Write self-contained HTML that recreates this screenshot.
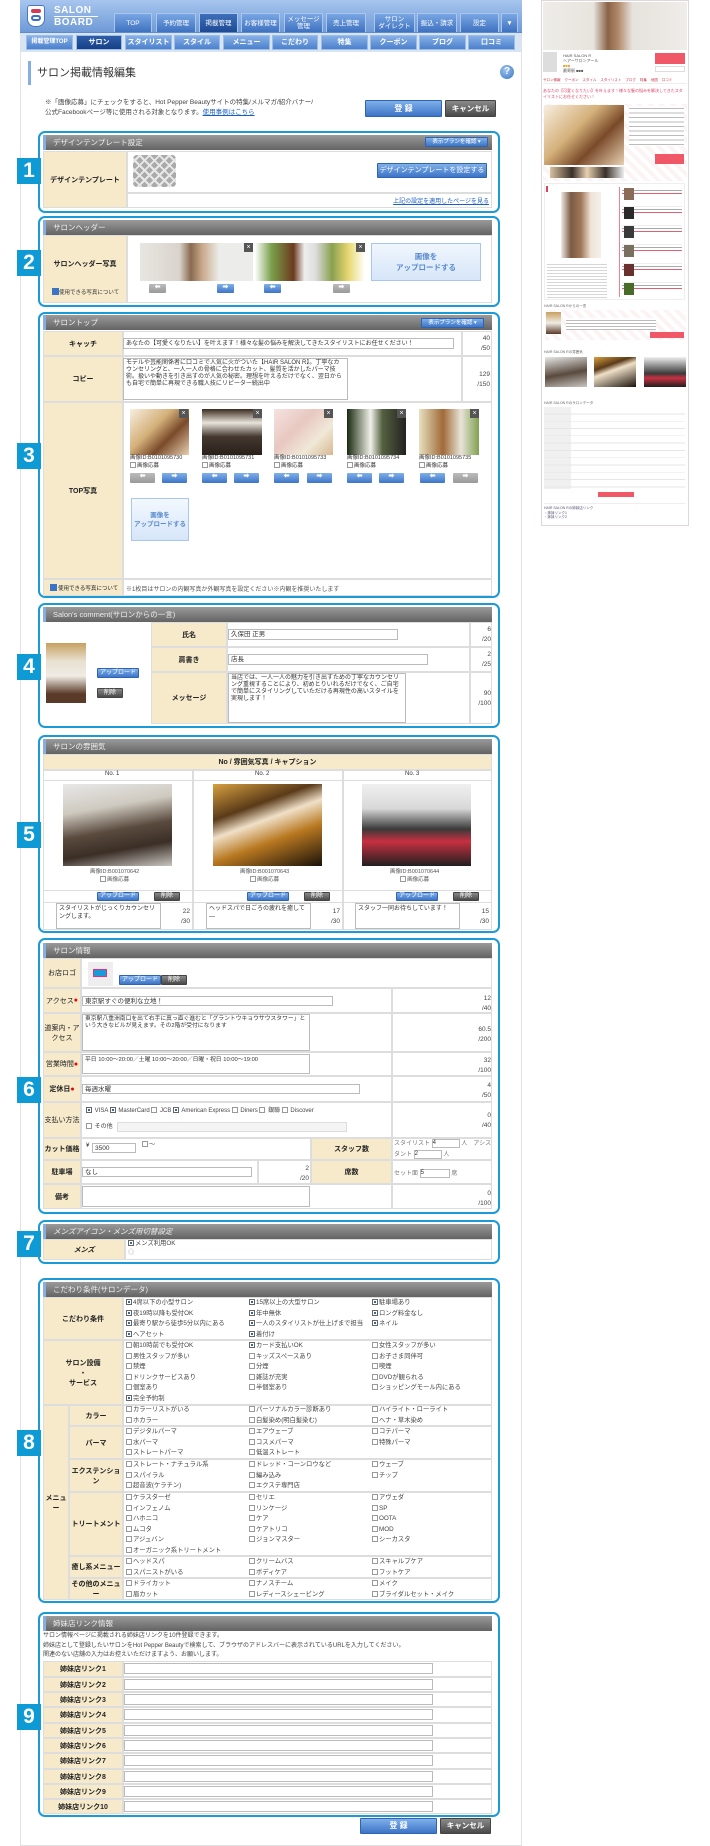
<!DOCTYPE html>
<html><head><meta charset="utf-8">
<style>
*{margin:0;padding:0;box-sizing:border-box}
body{width:710px;height:1846px;background:#fff;position:relative;overflow:hidden;font-family:"Liberation Sans","Noto Sans CJK JP",sans-serif;color:#333;font-size:7px}
.a{position:absolute}
.box{position:absolute;left:38px;width:462px;border:2px solid #1a9ad6;border-radius:7px;background:#fff}
.hd{position:absolute;left:43px;width:449px;height:15px;background:linear-gradient(#9a9a9a,#636363);color:#eee;font-size:7.5px;line-height:15px;padding-left:7px;border-left:3px solid #86aee3}
.bd{position:absolute;left:17px;width:24px;height:26px;background:#0e9bd5;color:#fff;font:bold 21px/26px "Liberation Sans",sans-serif;text-align:center}
.c{position:absolute;border:1px solid #ddd;background:#fff}
.lb{position:absolute;background:#f6eacb;border:1px solid #ddd;font-weight:bold;font-size:7px;display:flex;align-items:center;justify-content:center;text-align:center;color:#222}
.in{position:absolute;border:1px solid #bbb;background:#fff;font-size:6.5px;padding:1px 2px;color:#333;overflow:hidden;line-height:8px}
.cnt{position:absolute;font-size:6.5px;text-align:right;line-height:10px;color:#444}
.bb{position:absolute;background:linear-gradient(#7fb0ea,#3d74c6);color:#fff;border:1px solid #2f64b0;font-size:6px;text-align:center;border-radius:1px}
.bg{position:absolute;background:linear-gradient(#8a8a8a,#4a4a4a);color:#fff;border:1px solid #444;font-size:6px;text-align:center;border-radius:1px}
.ar{position:absolute;width:17px;height:9px;background:linear-gradient(#7fb0ea,#3d74c6);border-radius:1px;color:#fff;font-size:6px;line-height:9px;text-align:center}
.ar.g{background:linear-gradient(#bbb,#999)}
.x{position:absolute;width:9px;height:9px;background:#555;color:#fff;font-size:7px;line-height:9px;text-align:center}
.ck{position:absolute;font-size:6.3px;line-height:10.5px;color:#444;white-space:nowrap}
.cb{display:inline-block;width:6px;height:6px;border:1px solid #999;background:#fff;margin-right:1px;vertical-align:-1px}
.cb.on{border-color:#666;box-shadow:inset 0 0 0 1px #fff;background:#3366aa}
.tab{position:absolute;top:13px;height:19px;background:linear-gradient(#79a6e3,#3e72c0);border:1px solid #a9c6ee;border-bottom:none;color:#fff;font-size:6.5px;text-align:center;display:flex;align-items:center;justify-content:center;line-height:7px}
.st{position:absolute;top:35px;height:15px;background:linear-gradient(#86b0e6,#4c80cc);border:1px solid #9bbde9;color:#fff;font-size:7px;font-weight:bold;text-align:center;line-height:13px}
.ph{position:absolute}
</style></head><body>

<div class="a" style="left:20px;top:0;width:502px;height:1846px;border-left:1px solid #e2e2e2;border-right:1px solid #e2e2e2;border-bottom:1px solid #e2e2e2"></div>
<div class="a" style="left:20px;top:0;width:502px;height:32px;background:linear-gradient(#a7c5ee,#6f9ad6)"></div>
<div class="a" style="left:27px;top:5px;width:18px;height:22px;background:#fff;border-radius:3px 3px 8px 8px;border:1px solid #4a78c0"></div>
<div class="a" style="left:31px;top:9px;width:10px;height:4px;border:2px solid #d63a55;border-radius:3px"></div>
<div class="a" style="left:31px;top:15px;width:10px;height:6px;border:2px solid #3b6fc0;border-radius:3px"></div>
<div class="a" style="left:54px;top:5px;font:bold 10px/11px 'Liberation Sans',sans-serif;color:#fff;letter-spacing:0.5px">SALON</div>
<div class="a" style="left:54px;top:15.5px;width:44px;height:1px;background:#fff"></div>
<div class="a" style="left:54px;top:17px;font:bold 10px/11px 'Liberation Sans',sans-serif;color:#fff;letter-spacing:0.5px">BOARD</div>
<div class="tab" style="left:114px;width:38px">TOP</div>
<div class="tab" style="left:156px;width:40px">予約管理</div>
<div class="tab" style="left:199px;width:39px;background:linear-gradient(#3f6fb8,#1d4a95)">掲載管理</div>
<div class="tab" style="left:241px;width:39px">お客様管理</div>
<div class="tab" style="left:284px;width:39px">メッセージ<br>管理</div>
<div class="tab" style="left:326px;width:40px">売上管理</div>
<div class="tab" style="left:374px;width:41px">サロン<br>ダイレクト</div>
<div class="tab" style="left:417px;width:40px">振込・請求</div>
<div class="tab" style="left:460px;width:39px">設定</div>
<div class="tab" style="left:501px;width:17px">▼</div>
<div class="a" style="left:20px;top:32px;width:502px;height:20px;background:#d9e4f2;border-top:1px solid #5d8bcc"></div>
<div class="st" style="left:26px;width:47px;font-size:6px">掲載管理TOP</div>
<div class="st" style="left:76px;width:46px;background:linear-gradient(#2e5ea8,#163f86)">サロン</div>
<div class="st" style="left:125px;width:47px">スタイリスト</div>
<div class="st" style="left:174px;width:46px">スタイル</div>
<div class="st" style="left:223px;width:47px">メニュー</div>
<div class="st" style="left:272px;width:46px">こだわり</div>
<div class="st" style="left:321px;width:47px">特集</div>
<div class="st" style="left:370px;width:47px">クーポン</div>
<div class="st" style="left:419px;width:47px">ブログ</div>
<div class="st" style="left:468px;width:47px">口コミ</div>

<div class="a" style="left:28px;top:61px;width:3px;height:24px;background:#86aee3"></div>
<div class="a" style="left:37px;top:66px;font-size:11px;line-height:14px;color:#333">サロン掲載情報編集</div>
<div class="a" style="left:500px;top:65px;width:14px;height:14px;border-radius:50%;background:radial-gradient(circle at 40% 35%,#9cc3f0,#3c74c4);color:#fff;font:bold 10px/14px sans-serif;text-align:center">?</div>
<div class="a" style="left:45px;top:98px;font-size:6.5px;line-height:10px;color:#444">※「画像応募」にチェックをすると、Hot Pepper Beautyサイトの特集/メルマガ/紹介バナー/<br>公式Facebookページ等に使用される対象となります。<span style="color:#1a5fc8;text-decoration:underline">使用事例はこちら</span></div>
<div class="bb" style="left:365px;top:100px;width:77px;height:17px;font-size:8px;line-height:15px;font-weight:bold">登 録</div>
<div class="bg" style="left:445px;top:100px;width:51px;height:17px;font-size:7.5px;line-height:15px;font-weight:bold">キャンセル</div>

<!-- SECTION 1 -->
<div class="box" style="top:131px;height:82px"></div>
<div class="bd" style="top:158px">1</div>
<div class="hd" style="top:135px">デザインテンプレート設定</div>
<div class="bb" style="left:425px;top:137px;width:63px;height:10px;font-size:5.5px;line-height:8px">表示プランを確認 ▾</div>
<div class="lb" style="left:43px;top:151px;width:84px;height:57px">デザインテンプレート</div>
<div class="c" style="left:127px;top:151px;width:365px;height:42px"></div>
<div class="c" style="left:127px;top:193px;width:365px;height:15px"></div>
<div class="a" style="left:133px;top:155px;width:43px;height:32px;border-radius:4px;background-color:#aaa;background-image:repeating-linear-gradient(45deg,transparent 0 5px,#e8e8e8 5px 7px),repeating-linear-gradient(-45deg,transparent 0 5px,#e8e8e8 5px 7px)"></div>
<div class="bb" style="left:377px;top:163px;width:110px;height:15px;font-size:7px;line-height:13px">デザインテンプレートを設定する</div>
<div class="a" style="left:300px;width:189px;text-align:right;top:196px;font-size:6px;color:#1a5fc8;text-decoration:underline">上記の設定を適用したページを見る</div>

<!-- SECTION 2 -->
<div class="box" style="top:216px;height:91px"></div>
<div class="bd" style="top:250px">2</div>
<div class="hd" style="top:220px">サロンヘッダー</div>
<div class="lb" style="left:43px;top:235px;width:84px;height:68px;padding-bottom:10px">サロンヘッダー写真</div>
<div class="a" style="left:52px;top:288px;font-size:5.5px;color:#333"><span style="display:inline-block;width:7px;height:7px;background:#3c74c4;vertical-align:-1px"></span>使用できる写真について</div>
<div class="c" style="left:127px;top:235px;width:365px;height:68px"></div>
<div class="a" style="left:140px;top:243px;width:113px;height:38px;background:linear-gradient(90deg,#e8e6e2,#d9d3cb 35%,#8a6a50 45%,#c9a88a 55%,#ececea 70%)"></div>
<div class="x" style="left:244px;top:243px">×</div>
<div class="a" style="left:255px;top:243px;width:110px;height:38px;background:linear-gradient(90deg,#fff 0,#7aa04a 15%,#6d3a1e 35%,#eee 45%,#ddd 55%,#8aa050 70%,#e8d870 85%,#fff)"></div>
<div class="x" style="left:356px;top:243px">×</div>
<div class="a" style="left:371px;top:243px;width:110px;height:38px;background:linear-gradient(#f0f6fd,#d6e6f8);border:1px solid #a9c6ee;color:#5a8ad0;font-size:7.5px;text-align:center;line-height:11px;padding-top:7px;font-weight:bold">画像を<br>アップロードする</div>
<div class="ar g" style="left:149px;top:284px">⬅</div>
<div class="ar" style="left:217px;top:284px">➡</div>
<div class="ar" style="left:264px;top:284px">⬅</div>
<div class="ar g" style="left:333px;top:284px">➡</div>

<!-- SECTION 3 -->
<div class="box" style="top:312px;height:286px"></div>
<div class="bd" style="top:443px">3</div>
<div class="hd" style="top:315px">サロントップ</div>
<div class="bb" style="left:421px;top:318px;width:63px;height:10px;font-size:5.5px;line-height:8px">表示プランを確認 ▾</div>
<div class="lb" style="left:43px;top:331px;width:80px;height:25px">キャッチ</div>
<div class="lb" style="left:43px;top:356px;width:80px;height:46px">コピー</div>
<div class="lb" style="left:43px;top:402px;width:80px;height:177px">TOP写真</div>
<div class="lb" style="left:43px;top:579px;width:80px;height:17px;font-size:5.5px;font-weight:normal;justify-content:flex-start;padding-left:6px"><span style="display:inline-block;width:7px;height:7px;background:#3c74c4;margin-right:1px"></span>使用できる写真について</div>
<div class="c" style="left:123px;top:331px;width:339px;height:25px"></div>
<div class="c" style="left:462px;top:331px;width:30px;height:25px"></div>
<div class="c" style="left:123px;top:356px;width:339px;height:46px"></div>
<div class="c" style="left:462px;top:356px;width:30px;height:46px"></div>
<div class="c" style="left:123px;top:402px;width:369px;height:177px"></div>
<div class="c" style="left:123px;top:579px;width:369px;height:17px"></div>
<div class="in" style="left:123px;top:338px;width:331px;height:11px;font-size:6px">あなたの【可愛くなりたい】を叶えます！様々な髪の悩みを解決してきたスタイリストにお任せください！</div>
<div class="cnt" style="left:462px;top:334px;width:28px">40<br>/50</div>
<div class="in" style="left:123px;top:358px;width:225px;height:42px;font-size:6px;line-height:7px">モデルや芸能関係者に口コミで人気に火がついた【HAIR SALON R】。丁寧なカウンセリングと、一人一人の骨格に合わせたカット、髪質を活かしたパーマ技術。扱いや動きを引き出すのが人気の秘密。理想を叶えるだけでなく、翌日からも自宅で簡単に再現できる職人技にリピーター続出中</div>
<div class="cnt" style="left:462px;top:370px;width:28px">129<br>/150</div>
<div class="ph" style="left:130px;top:409px;width:59px;height:46px;background:linear-gradient(135deg,#f8eee0,#d4b07a 40%,#7a4a2a 65%,#e8d0b0)"></div>
<div class="ph" style="left:202px;top:409px;width:60px;height:46px;background:linear-gradient(#3a2a1e,#e8e4dc 30%,#443830 60%,#2a201a)"></div>
<div class="ph" style="left:274px;top:409px;width:59px;height:46px;background:linear-gradient(135deg,#f5e2e0,#e8c8c0 40%,#f0e8d8 70%,#d8b890)"></div>
<div class="ph" style="left:347px;top:409px;width:59px;height:46px;background:linear-gradient(90deg,#1a2a10,#f0f0e8 40%,#556040 60%,#222)"></div>
<div class="ph" style="left:419px;top:409px;width:60px;height:46px;background:linear-gradient(90deg,#e8e0c0,#a06a38 40%,#e8e4d8 70%,#80a050)"></div>
<div class="x" style="left:179px;top:409px">×</div><div class="x" style="left:253px;top:409px">×</div><div class="x" style="left:324px;top:409px">×</div><div class="x" style="left:397px;top:409px">×</div><div class="x" style="left:470px;top:409px">×</div>
<div class="a" style="left:130px;top:455px;font-size:5.5px;line-height:7px">画像ID:B0101095730<br><span class="cb"></span>画像応募</div>
<div class="a" style="left:202px;top:455px;font-size:5.5px;line-height:7px">画像ID:B0101095731<br><span class="cb"></span>画像応募</div>
<div class="a" style="left:274px;top:455px;font-size:5.5px;line-height:7px">画像ID:B0101095733<br><span class="cb"></span>画像応募</div>
<div class="a" style="left:347px;top:455px;font-size:5.5px;line-height:7px">画像ID:B0101095734<br><span class="cb"></span>画像応募</div>
<div class="a" style="left:419px;top:455px;font-size:5.5px;line-height:7px">画像ID:B0101095735<br><span class="cb"></span>画像応募</div>
<div class="ar g" style="left:130px;top:473px;width:25px;height:10px">⬅</div><div class="ar" style="left:162px;top:473px;width:25px;height:10px">➡</div>
<div class="ar" style="left:202px;top:473px;width:25px;height:10px">⬅</div><div class="ar" style="left:234px;top:473px;width:25px;height:10px">➡</div>
<div class="ar" style="left:274px;top:473px;width:25px;height:10px">⬅</div><div class="ar" style="left:307px;top:473px;width:25px;height:10px">➡</div>
<div class="ar" style="left:347px;top:473px;width:25px;height:10px">⬅</div><div class="ar" style="left:379px;top:473px;width:25px;height:10px">➡</div>
<div class="ar" style="left:420px;top:473px;width:25px;height:10px">⬅</div><div class="ar g" style="left:453px;top:473px;width:25px;height:10px">➡</div>
<div class="a" style="left:131px;top:498px;width:58px;height:43px;background:linear-gradient(#f3f8fe,#d6e6f8);border:1px solid #a9c6ee;color:#5a8ad0;font-size:6.5px;text-align:center;line-height:9px;padding-top:12px;font-weight:bold">画像を<br>アップロードする</div>
<div class="a" style="left:126px;top:584px;font-size:6px;color:#555">※1枚目はサロンの内観写真か外観写真を設定ください※内観を推奨いたします</div>

<!-- SECTION 4 -->
<div class="box" style="top:603px;height:125px"></div>
<div class="bd" style="top:654px">4</div>
<div class="hd" style="top:607px">Salon's comment(サロンからの一言)</div>
<div class="ph" style="left:46px;top:643px;width:40px;height:60px;background:linear-gradient(#c8a060,#e8e0d0 30%,#f0ece4 55%,#5a3a28 85%)"></div>
<div class="bb" style="left:97px;top:668px;width:42px;height:10px;line-height:8px">アップロード</div>
<div class="bg" style="left:97px;top:688px;width:26px;height:10px;line-height:8px">削除</div>
<div class="lb" style="left:151px;top:622px;width:76px;height:25px">氏名</div>
<div class="lb" style="left:151px;top:647px;width:76px;height:25px">肩書き</div>
<div class="lb" style="left:151px;top:672px;width:76px;height:52px">メッセージ</div>
<div class="c" style="left:227px;top:622px;width:243px;height:25px"></div><div class="c" style="left:470px;top:622px;width:22px;height:25px"></div>
<div class="c" style="left:227px;top:647px;width:243px;height:25px"></div><div class="c" style="left:470px;top:647px;width:22px;height:25px"></div>
<div class="c" style="left:227px;top:672px;width:243px;height:52px"></div><div class="c" style="left:470px;top:672px;width:22px;height:52px"></div>
<div class="in" style="left:228px;top:629px;width:170px;height:11px">久保田 正男</div>
<div class="in" style="left:228px;top:654px;width:200px;height:11px">店長</div>
<div class="in" style="left:228px;top:673px;width:178px;height:50px;font-size:6px;line-height:7px">当店では、一人一人の魅力を引き出すための丁寧なカウンセリング重視することにより、初めとりいれるだけでなく、ご自宅で簡単にスタイリングしていただける再現性の高いスタイルを実現します！</div>
<div class="cnt" style="left:470px;top:625px;width:21px">6<br>/20</div>
<div class="cnt" style="left:470px;top:650px;width:21px">2<br>/25</div>
<div class="cnt" style="left:470px;top:689px;width:21px">90<br>/100</div>

<!-- SECTION 5 -->
<div class="box" style="top:735px;height:198px"></div>
<div class="bd" style="top:822px">5</div>
<div class="hd" style="top:739px">サロンの雰囲気</div>
<div class="lb" style="left:43px;top:754px;width:449px;height:16px">No / 雰囲気写真 / キャプション</div>
<div class="c" style="left:43px;top:770px;width:150px;height:160px"></div>
<div class="c" style="left:193px;top:770px;width:150px;height:160px"></div>
<div class="c" style="left:343px;top:770px;width:149px;height:160px"></div>
<div class="a" style="left:43px;top:780px;width:449px;height:1px;background:#ddd"></div>
<div class="a" style="left:43px;top:890px;width:449px;height:1px;background:#ddd"></div>
<div class="a" style="left:43px;top:902px;width:449px;height:1px;background:#ddd"></div>
<div class="a" style="left:105px;top:771px;font-size:6px">No. 1</div>
<div class="a" style="left:255px;top:771px;font-size:6px">No. 2</div>
<div class="a" style="left:405px;top:771px;font-size:6px">No. 3</div>
<div class="ph" style="left:63px;top:784px;width:109px;height:82px;background:linear-gradient(170deg,#e8e8e8 0,#cfcac0 30%,#5a4a3e 55%,#3a2e26 75%,#c8c4c0)"></div>
<div class="ph" style="left:213px;top:784px;width:109px;height:82px;background:linear-gradient(160deg,#d8a040,#5a3a18 30%,#f0e0c8 45%,#b87820 65%,#1a120a)"></div>
<div class="ph" style="left:362px;top:784px;width:109px;height:82px;background:linear-gradient(180deg,#f0f0f0,#d8d8d8 30%,#3a3a3a 55%,#c83040 70%,#202020)"></div>
<div class="a" style="left:90px;top:868px;font-size:5.5px;line-height:8px;text-align:center;color:#555">画像ID:B001070642<br><span class="cb"></span>画像応募</div>
<div class="a" style="left:240px;top:868px;font-size:5.5px;line-height:8px;text-align:center;color:#555">画像ID:B001070643<br><span class="cb"></span>画像応募</div>
<div class="a" style="left:390px;top:868px;font-size:5.5px;line-height:8px;text-align:center;color:#555">画像ID:B001070644<br><span class="cb"></span>画像応募</div>
<div class="bb" style="left:97px;top:892px;width:42px;height:9px;line-height:7px">アップロード</div><div class="bg" style="left:154px;top:892px;width:26px;height:9px;line-height:7px">削除</div>
<div class="bb" style="left:247px;top:892px;width:42px;height:9px;line-height:7px">アップロード</div><div class="bg" style="left:304px;top:892px;width:26px;height:9px;line-height:7px">削除</div>
<div class="bb" style="left:396px;top:892px;width:42px;height:9px;line-height:7px">アップロード</div><div class="bg" style="left:453px;top:892px;width:26px;height:9px;line-height:7px">削除</div>
<div class="in" style="left:56px;top:903px;width:105px;height:26px;font-size:6px">スタイリストがじっくりカウンセリングします。</div>
<div class="in" style="left:206px;top:903px;width:105px;height:26px;font-size:6px">ヘッドスパで日ごろの疲れを癒して―</div>
<div class="in" style="left:355px;top:903px;width:105px;height:26px;font-size:6px">スタッフ一同お待ちしています！</div>
<div class="cnt" style="left:162px;top:907px;width:28px">22<br>/30</div>
<div class="cnt" style="left:312px;top:907px;width:28px">17<br>/30</div>
<div class="cnt" style="left:461px;top:907px;width:28px">15<br>/30</div>

<!-- SECTION 6 -->
<div class="box" style="top:938px;height:276px"></div>
<div class="bd" style="top:1077px">6</div>
<div class="hd" style="top:943px">サロン情報</div>
<div class="lb" style="left:43px;top:958px;width:38px;height:30px;font-weight:normal">お店ロゴ</div>
<div class="c" style="left:81px;top:958px;width:411px;height:30px"></div>
<div class="a" style="left:88px;top:962px;width:25px;height:24px;background:#eee"></div>
<div class="a" style="left:93px;top:969px;width:14px;height:8px;background:#1a9ad6;border:1px solid #e03080"></div>
<div class="bb" style="left:119px;top:975px;width:42px;height:10px;line-height:8px">アップロード</div><div class="bg" style="left:161px;top:975px;width:26px;height:10px;line-height:8px">削除</div>
<div class="lb" style="left:43px;top:988px;width:38px;height:25px;font-weight:normal">アクセス<span style="color:#e00">●</span></div>
<div class="c" style="left:81px;top:988px;width:311px;height:25px"></div><div class="c" style="left:392px;top:988px;width:100px;height:25px"></div>
<div class="in" style="left:82px;top:996px;width:251px;height:10px">東京駅すぐの便利な立地！</div>
<div class="cnt" style="left:392px;top:994px;width:99px">12<br>/40</div>
<div class="lb" style="left:43px;top:1013px;width:38px;height:39px;font-weight:normal">道案内・アクセス</div>
<div class="c" style="left:81px;top:1013px;width:311px;height:39px"></div><div class="c" style="left:392px;top:1013px;width:100px;height:39px"></div>
<div class="in" style="left:82px;top:1014px;width:228px;height:37px;font-size:5.8px;line-height:7px">東京駅八重洲南口を出て右手に真っ直ぐ進むと「グラントウキョウサウスタワー」という大きなビルが見えます。その2階が受付になります</div>
<div class="cnt" style="left:392px;top:1025px;width:99px">60.5<br>/200</div>
<div class="lb" style="left:43px;top:1052px;width:38px;height:24px;font-weight:normal">営業時間<span style="color:#e00">●</span></div>
<div class="c" style="left:81px;top:1052px;width:311px;height:24px"></div><div class="c" style="left:392px;top:1052px;width:100px;height:24px"></div>
<div class="in" style="left:82px;top:1054px;width:228px;height:20px;font-size:5.8px">平日 10:00〜20:00／土曜 10:00〜20:00／日曜・祝日 10:00〜19:00</div>
<div class="cnt" style="left:392px;top:1056px;width:99px">32<br>/100</div>
<div class="lb" style="left:43px;top:1076px;width:38px;height:26px">定休日<span style="color:#e00">●</span></div>
<div class="c" style="left:81px;top:1076px;width:311px;height:26px"></div><div class="c" style="left:392px;top:1076px;width:100px;height:26px"></div>
<div class="in" style="left:82px;top:1084px;width:278px;height:10px">毎週水曜</div>
<div class="cnt" style="left:392px;top:1081px;width:99px">4<br>/50</div>
<div class="lb" style="left:43px;top:1102px;width:38px;height:36px;font-weight:normal">支払い方法</div>
<div class="c" style="left:81px;top:1102px;width:311px;height:36px"></div><div class="c" style="left:392px;top:1102px;width:100px;height:36px"></div>
<div class="ck" style="left:86px;top:1106px;font-size:6px"><span class="cb on"></span> VISA <span class="cb on"></span> MasterCard <span class="cb"></span> JCB <span class="cb on"></span> American Express <span class="cb"></span> Diners <span class="cb"></span> 銀聯 <span class="cb"></span> Discover</div>
<div class="ck" style="left:86px;top:1122px;font-size:6px"><span class="cb"></span> その他</div>
<div class="a" style="left:117px;top:1122px;width:230px;height:10px;border:1px solid #ddd;background:#f4f4f4"></div>
<div class="cnt" style="left:392px;top:1111px;width:99px">0<br>/40</div>
<div class="lb" style="left:43px;top:1138px;width:38px;height:22px">カット価格</div>
<div class="c" style="left:81px;top:1138px;width:230px;height:22px"></div>
<div class="lb" style="left:311px;top:1138px;width:81px;height:22px">スタッフ数</div>
<div class="c" style="left:392px;top:1138px;width:100px;height:22px"></div>
<div class="a" style="left:86px;top:1143px;font-size:6px">¥</div>
<div class="in" style="left:92px;top:1143px;width:44px;height:10px">3500</div>
<div class="ck" style="left:142px;top:1140px"><span class="cb"></span>〜</div>
<div class="a" style="left:394px;top:1139px;font-size:6px;line-height:11px;color:#777">スタイリスト <span style="display:inline-block;width:28px;height:9px;border:1px solid #bbb;vertical-align:middle;color:#333;line-height:7px">4</span> 人　アシス<br>タント <span style="display:inline-block;width:28px;height:9px;border:1px solid #bbb;vertical-align:middle;color:#333;line-height:7px">2</span> 人</div>
<div class="lb" style="left:43px;top:1160px;width:38px;height:24px">駐車場</div>
<div class="c" style="left:81px;top:1160px;width:177px;height:24px"></div><div class="c" style="left:258px;top:1160px;width:53px;height:24px"></div>
<div class="lb" style="left:311px;top:1160px;width:81px;height:24px">席数</div>
<div class="c" style="left:392px;top:1160px;width:100px;height:24px"></div>
<div class="in" style="left:82px;top:1167px;width:170px;height:10px">なし</div>
<div class="cnt" style="left:258px;top:1164px;width:51px">2<br>/20</div>
<div class="a" style="left:394px;top:1168px;font-size:6px;color:#777">セット面 <span style="display:inline-block;width:30px;height:9px;border:1px solid #bbb;vertical-align:middle;color:#333;line-height:7px">5</span> 席</div>
<div class="lb" style="left:43px;top:1184px;width:38px;height:25px">備考</div>
<div class="c" style="left:81px;top:1184px;width:311px;height:25px"></div><div class="c" style="left:392px;top:1184px;width:100px;height:25px"></div>
<div class="in" style="left:82px;top:1186px;width:228px;height:21px"></div>
<div class="cnt" style="left:392px;top:1189px;width:99px">0<br>/100</div>

<!-- SECTION 7 -->
<div class="box" style="top:1220px;height:44px"></div>
<div class="bd" style="top:1231px">7</div>
<div class="hd" style="top:1224px;font-style:italic">メンズアイコン・メンズ用切替設定</div>
<div class="lb" style="left:43px;top:1239px;width:82px;height:21px;font-style:italic">メンズ</div>
<div class="c" style="left:125px;top:1239px;width:367px;height:21px"></div>
<div class="ck" style="left:128px;top:1239px;line-height:9px"><span class="cb on"></span>メンズ利用OK<br><span style="color:#aaa">◎</span></div>

<!-- SECTION 8 -->
<div class="box" style="top:1278px;height:325px"></div>
<div class="bd" style="top:1430px">8</div>
<div class="hd" style="top:1282px">こだわり条件(サロンデータ)</div>
<div class="lb" style="left:43px;top:1297px;width:80px;height:43px">こだわり条件</div>
<div class="lb" style="left:43px;top:1340px;width:80px;height:65px">サロン設備<br>・<br>サービス</div>
<div class="lb" style="left:43px;top:1405px;width:26px;height:195px">メニュー</div>
<div class="lb" style="left:69px;top:1405px;width:54px;height:21px">カラー</div>
<div class="lb" style="left:69px;top:1426px;width:54px;height:33px">パーマ</div>
<div class="lb" style="left:69px;top:1459px;width:54px;height:33px">エクステンション</div>
<div class="lb" style="left:69px;top:1492px;width:54px;height:64px">トリートメント</div>
<div class="lb" style="left:69px;top:1556px;width:54px;height:22px">癒し系メニュー</div>
<div class="lb" style="left:69px;top:1578px;width:54px;height:22px">その他のメニュー</div>
<div class="c" style="left:123px;top:1297px;width:369px;height:43px"></div>
<div class="c" style="left:123px;top:1340px;width:369px;height:65px"></div>
<div class="c" style="left:123px;top:1405px;width:369px;height:21px"></div>
<div class="c" style="left:123px;top:1426px;width:369px;height:33px"></div>
<div class="c" style="left:123px;top:1459px;width:369px;height:33px"></div>
<div class="c" style="left:123px;top:1492px;width:369px;height:64px"></div>
<div class="c" style="left:123px;top:1556px;width:369px;height:22px"></div>
<div class="c" style="left:123px;top:1578px;width:369px;height:22px"></div>
<div class="ck" style="left:126px;top:1298px"><span class="cb on"></span>4席以下の小型サロン<br><span class="cb on"></span>夜19時以降も受付OK<br><span class="cb on"></span>最寄り駅から徒歩5分以内にある<br><span class="cb on"></span>ヘアセット</div>
<div class="ck" style="left:249px;top:1298px"><span class="cb on"></span>15席以上の大型サロン<br><span class="cb on"></span>年中無休<br><span class="cb on"></span>一人のスタイリストが仕上げまで担当<br><span class="cb on"></span>着付け</div>
<div class="ck" style="left:372px;top:1298px"><span class="cb on"></span>駐車場あり<br><span class="cb on"></span>ロング料金なし<br><span class="cb on"></span>ネイル</div>
<div class="ck" style="left:126px;top:1341px"><span class="cb"></span>朝10時前でも受付OK<br><span class="cb"></span>男性スタッフが多い<br><span class="cb"></span>禁煙<br><span class="cb"></span>ドリンクサービスあり<br><span class="cb"></span>個室あり<br><span class="cb on"></span>完全予約制</div>
<div class="ck" style="left:249px;top:1341px"><span class="cb on"></span>カード支払いOK<br><span class="cb"></span>キッズスペースあり<br><span class="cb"></span>分煙<br><span class="cb"></span>雑誌が充実<br><span class="cb"></span>半個室あり</div>
<div class="ck" style="left:372px;top:1341px"><span class="cb"></span>女性スタッフが多い<br><span class="cb"></span>お子さま同伴可<br><span class="cb"></span>喫煙<br><span class="cb"></span>DVDが観られる<br><span class="cb"></span>ショッピングモール内にある</div>
<div class="ck" style="left:126px;top:1405px"><span class="cb"></span>カラーリストがいる<br><span class="cb"></span>ホカラー</div>
<div class="ck" style="left:249px;top:1405px"><span class="cb"></span>パーソナルカラー診断あり<br><span class="cb"></span>白髪染め(明白髪染む)</div>
<div class="ck" style="left:372px;top:1405px"><span class="cb"></span>ハイライト・ローライト<br><span class="cb"></span>ヘナ・草木染め</div>
<div class="ck" style="left:126px;top:1427px"><span class="cb"></span>デジタルパーマ<br><span class="cb"></span>水パーマ<br><span class="cb"></span>ストレートパーマ</div>
<div class="ck" style="left:249px;top:1427px"><span class="cb"></span>エアウェーブ<br><span class="cb"></span>コスメパーマ<br><span class="cb"></span>低温ストレート</div>
<div class="ck" style="left:372px;top:1427px"><span class="cb"></span>コテパーマ<br><span class="cb"></span>特殊パーマ</div>
<div class="ck" style="left:126px;top:1460px"><span class="cb"></span>ストレート・ナチュラル系<br><span class="cb"></span>スパイラル<br><span class="cb"></span>超音波(ケラチン)</div>
<div class="ck" style="left:249px;top:1460px"><span class="cb"></span>ドレッド・コーンロウなど<br><span class="cb"></span>編み込み<br><span class="cb"></span>エクステ専門店</div>
<div class="ck" style="left:372px;top:1460px"><span class="cb"></span>ウェーブ<br><span class="cb"></span>チップ</div>
<div class="ck" style="left:126px;top:1493px"><span class="cb"></span>ケラスターゼ<br><span class="cb"></span>インフェノム<br><span class="cb"></span>ハホニコ<br><span class="cb"></span>ムコタ<br><span class="cb"></span>アジュバン<br><span class="cb"></span>オーガニック系トリートメント</div>
<div class="ck" style="left:249px;top:1493px"><span class="cb"></span>セリエ<br><span class="cb"></span>リンケージ<br><span class="cb"></span>ケア<br><span class="cb"></span>ケアトリコ<br><span class="cb"></span>ジョンマスター</div>
<div class="ck" style="left:372px;top:1493px"><span class="cb"></span>アヴェダ<br><span class="cb"></span>SP<br><span class="cb"></span>OOTA<br><span class="cb"></span>MOD<br><span class="cb"></span>シーカスタ</div>
<div class="ck" style="left:126px;top:1557px"><span class="cb"></span>ヘッドスパ<br><span class="cb"></span>スパニストがいる</div>
<div class="ck" style="left:249px;top:1557px"><span class="cb"></span>クリームバス<br><span class="cb"></span>ボディケア</div>
<div class="ck" style="left:372px;top:1557px"><span class="cb"></span>スキャルプケア<br><span class="cb"></span>フットケア</div>
<div class="ck" style="left:126px;top:1579px"><span class="cb"></span>ドライカット<br><span class="cb"></span>眉カット</div>
<div class="ck" style="left:249px;top:1579px"><span class="cb"></span>ナノスチーム<br><span class="cb"></span>レディースシェービング</div>
<div class="ck" style="left:372px;top:1579px"><span class="cb"></span>メイク<br><span class="cb"></span>ブライダルセット・メイク</div>

<!-- SECTION 9 -->
<div class="box" style="top:1612px;height:205px"></div>
<div class="bd" style="top:1704px">9</div>
<div class="hd" style="top:1616px">姉妹店リンク情報</div>
<div class="a" style="left:43px;top:1632px;font-size:6px;line-height:9.6px;color:#444">サロン情報ページに掲載される姉妹店リンクを10件登録できます。<br>姉妹店として登録したいサロンをHot Pepper Beautyで検索して、ブラウザのアドレスバーに表示されているURLを入力してください。<br>関連のない店舗の入力はお控えいただけますよう、お願いします。</div>
<div class="lb" style="left:43px;top:1661px;width:80px;height:16px">姉妹店リンク1</div><div class="c" style="left:123px;top:1661px;width:369px;height:16px"></div><div class="in" style="left:124px;top:1663px;width:309px;height:11px"></div>
<div class="lb" style="left:43px;top:1677px;width:80px;height:15px">姉妹店リンク2</div><div class="c" style="left:123px;top:1677px;width:369px;height:15px"></div><div class="in" style="left:124px;top:1679px;width:309px;height:11px"></div>
<div class="lb" style="left:43px;top:1692px;width:80px;height:15px">姉妹店リンク3</div><div class="c" style="left:123px;top:1692px;width:369px;height:15px"></div><div class="in" style="left:124px;top:1694px;width:309px;height:11px"></div>
<div class="lb" style="left:43px;top:1707px;width:80px;height:16px">姉妹店リンク4</div><div class="c" style="left:123px;top:1707px;width:369px;height:16px"></div><div class="in" style="left:124px;top:1709px;width:309px;height:11px"></div>
<div class="lb" style="left:43px;top:1723px;width:80px;height:15px">姉妹店リンク5</div><div class="c" style="left:123px;top:1723px;width:369px;height:15px"></div><div class="in" style="left:124px;top:1725px;width:309px;height:11px"></div>
<div class="lb" style="left:43px;top:1738px;width:80px;height:15px">姉妹店リンク6</div><div class="c" style="left:123px;top:1738px;width:369px;height:15px"></div><div class="in" style="left:124px;top:1740px;width:309px;height:11px"></div>
<div class="lb" style="left:43px;top:1753px;width:80px;height:16px">姉妹店リンク7</div><div class="c" style="left:123px;top:1753px;width:369px;height:16px"></div><div class="in" style="left:124px;top:1755px;width:309px;height:11px"></div>
<div class="lb" style="left:43px;top:1769px;width:80px;height:15px">姉妹店リンク8</div><div class="c" style="left:123px;top:1769px;width:369px;height:15px"></div><div class="in" style="left:124px;top:1771px;width:309px;height:11px"></div>
<div class="lb" style="left:43px;top:1784px;width:80px;height:15px">姉妹店リンク9</div><div class="c" style="left:123px;top:1784px;width:369px;height:15px"></div><div class="in" style="left:124px;top:1786px;width:309px;height:11px"></div>
<div class="lb" style="left:43px;top:1799px;width:80px;height:15px">姉妹店リンク10</div><div class="c" style="left:123px;top:1799px;width:369px;height:15px"></div><div class="in" style="left:124px;top:1801px;width:309px;height:11px"></div>
<div class="bb" style="left:360px;top:1818px;width:77px;height:16px;font-size:8px;line-height:14px;font-weight:bold">登 録</div>
<div class="bg" style="left:440px;top:1818px;width:51px;height:16px;font-size:7.5px;line-height:14px;font-weight:bold">キャンセル</div>

<!-- RIGHT PREVIEW -->
<div class="a" style="left:541px;top:0;width:148px;height:526px;border:1px solid #e0d8d8;background:#fff"></div>
<div class="a" style="left:543px;top:2px;width:144px;height:48px;background:linear-gradient(90deg,#eeece8 0,#e8e4de 35%,#8a6248 45%,#b08868 52%,#e6e2dc 62%,#efede9)"></div>
<div class="a" style="left:543px;top:52px;width:14px;height:20px;background:#ddd"></div>
<div class="a" style="left:563px;top:53px;font-size:4px;line-height:5px;color:#555">HAIR SALON R<br>ヘアーサロンアール<br><span style="color:#f0a030">■■■</span><br>最寄駅 ■■■</div>
<div class="a" style="left:655px;top:53px;width:30px;height:11px;background:#f05868"></div>
<div class="a" style="left:655px;top:66px;width:30px;height:6px;border:1px solid #ddd"></div>
<div class="a" style="left:543px;top:76px;width:144px;height:8px;border-bottom:1px solid #eee;font-size:3.5px;color:#c34;line-height:8px;word-spacing:3px">サロン情報 クーポン スタイル スタイリスト ブログ 特集 地図 口コミ</div>
<div class="a" style="left:543px;top:88px;width:142px;font-size:4px;line-height:5.5px;color:#e04060">あなたの【可愛くなりたい】を叶えます！様々な髪の悩みを解決してきたスタイリストにお任せください！</div>
<div class="a" style="left:543px;top:104px;width:144px;height:77px;background:repeating-linear-gradient(45deg,#fbf3f4 0 4px,#fff 4px 8px)"></div>
<div class="a" style="left:544px;top:105px;width:80px;height:60px;background:linear-gradient(135deg,#f8eee0,#d4b07a 40%,#7a4a2a 65%,#e8d0b0)"></div>
<div class="a" style="left:629px;top:106px;width:55px;height:40px;background:repeating-linear-gradient(#fff 0 2px,#bbb 2px 3px,#fff 3px 4.5px)"></div>
<div class="a" style="left:655px;top:154px;width:29px;height:10px;background:#f05868"></div>
<div class="a" style="left:550px;top:167px;width:74px;height:11px;background:linear-gradient(90deg,#d8c0a0,#3a3028 30%,#e8d0b0 50%,#3a3028 75%,#eee)"></div>
<div class="a" style="left:544px;top:183px;width:141px;height:117px;border:1px solid #eee"></div>
<div class="a" style="left:546px;top:186px;width:2px;height:6px;background:#e04060"></div>
<div class="a" style="left:561px;top:192px;width:40px;height:66px;background:linear-gradient(90deg,#f0eae4,#7a5a44 25%,#a07858 50%,#f0e4d8 75%,#f4f0ec)"></div>
<div class="a" style="left:547px;top:262px;width:60px;height:36px;background:repeating-linear-gradient(#fff 0 2px,#ccc 2px 3px);opacity:.8"></div>
<div class="a" style="left:619px;top:187px;width:1px;height:110px;background:#f08090"></div>
<div class="a" style="left:622px;top:188px;width:60px;height:110px;background:repeating-linear-gradient(#fff 0 2px,#aaa 2px 3px,#fff 3px 5px,#e06070 5px 6px,#fff 6px 18px,#eee 18px 19px)"></div>
<div class="a" style="left:624px;top:188px;width:10px;height:12px;background:#8a6a58"></div>
<div class="a" style="left:624px;top:207px;width:10px;height:12px;background:#2a2a2a"></div>
<div class="a" style="left:624px;top:226px;width:10px;height:12px;background:#3a3a3a"></div>
<div class="a" style="left:624px;top:245px;width:10px;height:12px;background:#7a7060"></div>
<div class="a" style="left:624px;top:264px;width:10px;height:12px;background:#6a3030"></div>
<div class="a" style="left:624px;top:283px;width:10px;height:12px;background:#4a6a2a"></div>
<div class="a" style="left:544px;top:304px;font-size:3.5px;color:#666">HAIR SALON Rからの一言</div>
<div class="a" style="left:545px;top:310px;width:141px;height:30px;background:repeating-linear-gradient(45deg,#fbf3f4 0 4px,#fff 4px 8px)"></div>
<div class="a" style="left:546px;top:312px;width:15px;height:22px;background:linear-gradient(#c8a060,#f0ece4 50%,#5a3a28)"></div>
<div class="a" style="left:566px;top:318px;width:90px;height:12px;background:repeating-linear-gradient(#fff 0 2px,#bbb 2px 3px)"></div>
<div class="a" style="left:650px;top:332px;width:34px;height:6px;background:#f05868"></div>
<div class="a" style="left:544px;top:350px;font-size:3.5px;color:#666">HAIR SALON Rの雰囲気</div>
<div class="a" style="left:545px;top:357px;width:42px;height:30px;background:linear-gradient(170deg,#e8e8e8,#5a4a3e 55%,#c8c4c0)"></div>
<div class="a" style="left:594px;top:357px;width:42px;height:30px;background:linear-gradient(160deg,#d8a040,#5a3a18 30%,#f0e0c8 45%,#1a120a)"></div>
<div class="a" style="left:644px;top:357px;width:42px;height:30px;background:linear-gradient(#f0f0f0,#3a3a3a 55%,#c83040 70%,#202020)"></div>
<div class="a" style="left:544px;top:401px;font-size:3.5px;color:#666">HAIR SALON Rのサロンデータ</div>
<div class="a" style="left:544px;top:407px;width:141px;height:82px;background:repeating-linear-gradient(#fff 0 6.5px,#e6e6e6 6.5px 7.3px)"></div>
<div class="a" style="left:544px;top:407px;width:27px;height:82px;background:rgba(230,230,230,.6)"></div>
<div class="a" style="left:598px;top:492px;width:36px;height:5px;background:#f05868"></div>
<div class="a" style="left:544px;top:503px;width:141px;height:1px;background:#eee"></div>
<div class="a" style="left:544px;top:506px;font-size:3.5px;line-height:4.5px;color:#557">HAIR SALON Rの姉妹店リンク<br>・姉妹リンク1<br>・姉妹リンク2</div>

</body></html>
